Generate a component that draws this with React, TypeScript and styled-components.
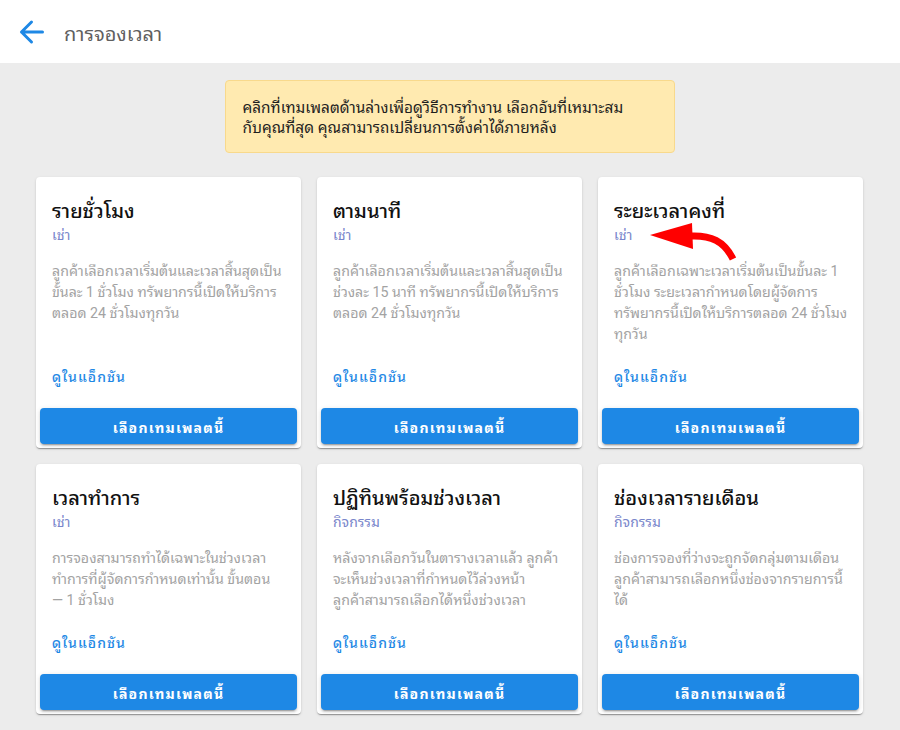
import React from "react";
import styled, { createGlobalStyle } from "styled-components";

const GlobalStyle = createGlobalStyle`
  html, body {
    margin: 0;
    padding: 0;
    background: #ececec;
    font-family: Roboto, "Noto Sans Thai Looped", Loma, Garuda, Waree, Tahoma, "Noto Sans Thai", "Noto Sans", sans-serif;
  }
  * { box-sizing: border-box; }
`;

const Page = styled.div`
  width: 900px;
  min-height: 730px;
  background: #ececec;
`;

const Header = styled.header`
  height: 63px;
  background: #fff;
  display: flex;
  align-items: center;
  padding-left: 19px;
  gap: 19px;
`;

const BackButton = styled.button`
  border: 0;
  background: none;
  padding: 0;
  width: 26px;
  height: 26px;
  display: flex;
  align-items: center;
  justify-content: center;
  cursor: pointer;
`;

const HeaderTitle = styled.h1`
  margin: 0;
  font-size: 20px;
  font-weight: 400;
  color: #5f5f5f;
`;

const Main = styled.main`
  padding: 17px 37px 16px 36px;
  display: flex;
  flex-direction: column;
  align-items: center;
`;

const Notice = styled.div`
  width: 450px;
  background: #ffeab0;
  border: 1px solid #f8d98c;
  border-radius: 4px;
  padding: 17px 16px 14px 17px;
  font-size: 15.4px;
  line-height: 20px;
  color: #1f1f1f;
  margin-bottom: 24px;
`;

const Grid = styled.div`
  width: 100%;
  display: grid;
  grid-template-columns: repeat(3, 1fr);
  column-gap: 16px;
  row-gap: 16px;
`;

const Card = styled.div`
  background: #fff;
  border-radius: 4px;
  box-shadow: 0 2px 1px -1px rgba(0, 0, 0, 0.2), 0 1px 1px 0 rgba(0, 0, 0, 0.14),
    0 1px 3px 0 rgba(0, 0, 0, 0.12);
  display: flex;
  flex-direction: column;
  padding: 0 4px 4px;
  position: relative;
`;

const CardBody = styled.div`
  flex: 1;
  display: flex;
  flex-direction: column;
  padding: 20px 12px 0;
`;

const CardTitle = styled.h2`
  margin: 0;
  font-size: 20px;
  line-height: 28px;
  font-weight: 500;
  color: #111;
`;

const Kind = styled.div`
  font-size: 14px;
  line-height: 20px;
  color: #7986cb;
`;

const Desc = styled.p`
  margin: 16px 0 0;
  font-size: 14.2px;
  line-height: 21px;
  color: #a3a3a3;
`;

const Link = styled.a`
  margin-top: auto;
  padding-top: 22px;
  font-size: 14px;
  line-height: 20px;
  font-weight: 500;
  letter-spacing: 1px;
  color: #1e88e5;
  text-decoration: none;
  margin-bottom: 21px;
`;

const ChooseButton = styled.button`
  height: 36px;
  border: 0;
  border-radius: 4px;
  background: #1e88e5;
  color: #fff;
  font-family: inherit;
  font-size: 14px;
  font-weight: 700;
  letter-spacing: 1.2px;
  box-shadow: 0 3px 1px -2px rgba(0, 0, 0, 0.2), 0 2px 2px 0 rgba(0, 0, 0, 0.14),
    0 1px 5px 0 rgba(0, 0, 0, 0.12);
  cursor: pointer;
`;

const Pointer = styled.svg`
  position: absolute;
  left: 48px;
  top: 44px;
  pointer-events: none;
`;

const templates = [
  {
    title: "รายชั่วโมง",
    kind: "เช่า",
    desc: [
      "ลูกค้าเลือกเวลาเริ่มต้นและเวลาสิ้นสุดเป็น",
      "ขั้นละ 1 ชั่วโมง ทรัพยากรนี้เปิดให้บริการ",
      "ตลอด 24 ชั่วโมงทุกวัน",
    ],
  },
  {
    title: "ตามนาที",
    kind: "เช่า",
    desc: [
      "ลูกค้าเลือกเวลาเริ่มต้นและเวลาสิ้นสุดเป็น",
      "ช่วงละ 15 นาที ทรัพยากรนี้เปิดให้บริการ",
      "ตลอด 24 ชั่วโมงทุกวัน",
    ],
  },
  {
    title: "ระยะเวลาคงที่",
    kind: "เช่า",
    desc: [
      "ลูกค้าเลือกเฉพาะเวลาเริ่มต้นเป็นขั้นละ 1",
      "ชั่วโมง ระยะเวลากำหนดโดยผู้จัดการ",
      "ทรัพยากรนี้เปิดให้บริการตลอด 24 ชั่วโมง",
      "ทุกวัน",
    ],
    pointer: true,
  },
  {
    title: "เวลาทำการ",
    kind: "เช่า",
    desc: [
      "การจองสามารถทำได้เฉพาะในช่วงเวลา",
      "ทำการที่ผู้จัดการกำหนดเท่านั้น ขั้นตอน",
      "— 1 ชั่วโมง",
    ],
  },
  {
    title: "ปฏิทินพร้อมช่วงเวลา",
    kind: "กิจกรรม",
    desc: [
      "หลังจากเลือกวันในตารางเวลาแล้ว ลูกค้า",
      "จะเห็นช่วงเวลาที่กำหนดไว้ล่วงหน้า",
      "ลูกค้าสามารถเลือกได้หนึ่งช่วงเวลา",
    ],
  },
  {
    title: "ช่องเวลารายเดือน",
    kind: "กิจกรรม",
    desc: [
      "ช่องการจองที่ว่างจะถูกจัดกลุ่มตามเดือน",
      "ลูกค้าสามารถเลือกหนึ่งช่องจากรายการนี้",
      "ได้",
    ],
  },
];

const BackArrow = () => (
  <svg width="26" height="26" viewBox="0 0 26 26" fill="none">
    <path
      d="M2.5 13H23.5M12.5 3L2.5 13l10 10"
      stroke="#1e88e5"
      strokeWidth="3"
      strokeLinecap="round"
      strokeLinejoin="round"
    />
  </svg>
);

// red annotation arrow pointing at the "เช่า" label
const RedArrow = () => (
  <Pointer width="100" height="50" viewBox="0 0 100 50">
    <path d="M87 38 C 78 20, 65 14, 44 15" stroke="#f00" strokeWidth="7" fill="none" />
    <path d="M4 14 L46 2 L47 28 Z" fill="#f00" />
  </Pointer>
);

export default function App() {
  return (
    <Page>
      <GlobalStyle />
      <Header>
        <BackButton aria-label="back">
          <BackArrow />
        </BackButton>
        <HeaderTitle>การจองเวลา</HeaderTitle>
      </Header>
      <Main>
        <Notice>
          คลิกที่เทมเพลตด้านล่างเพื่อดูวิธีการทำงาน เลือกอันที่เหมาะสม
          <br />
          กับคุณที่สุด คุณสามารถเปลี่ยนการตั้งค่าได้ภายหลัง
        </Notice>
        <Grid>
          {templates.map((t) => (
            <Card key={t.title}>
              <CardBody>
                <CardTitle>{t.title}</CardTitle>
                <Kind>{t.kind}</Kind>
                <Desc>
                  {t.desc.map((line, i) => (
                    <React.Fragment key={i}>
                      {i > 0 && <br />}
                      {line}
                    </React.Fragment>
                  ))}
                </Desc>
                <Link href="#">ดูในแอ็กชัน</Link>
              </CardBody>
              <ChooseButton>เลือกเทมเพลตนี้</ChooseButton>
              {t.pointer && <RedArrow />}
            </Card>
          ))}
        </Grid>
      </Main>
    </Page>
  );
}
